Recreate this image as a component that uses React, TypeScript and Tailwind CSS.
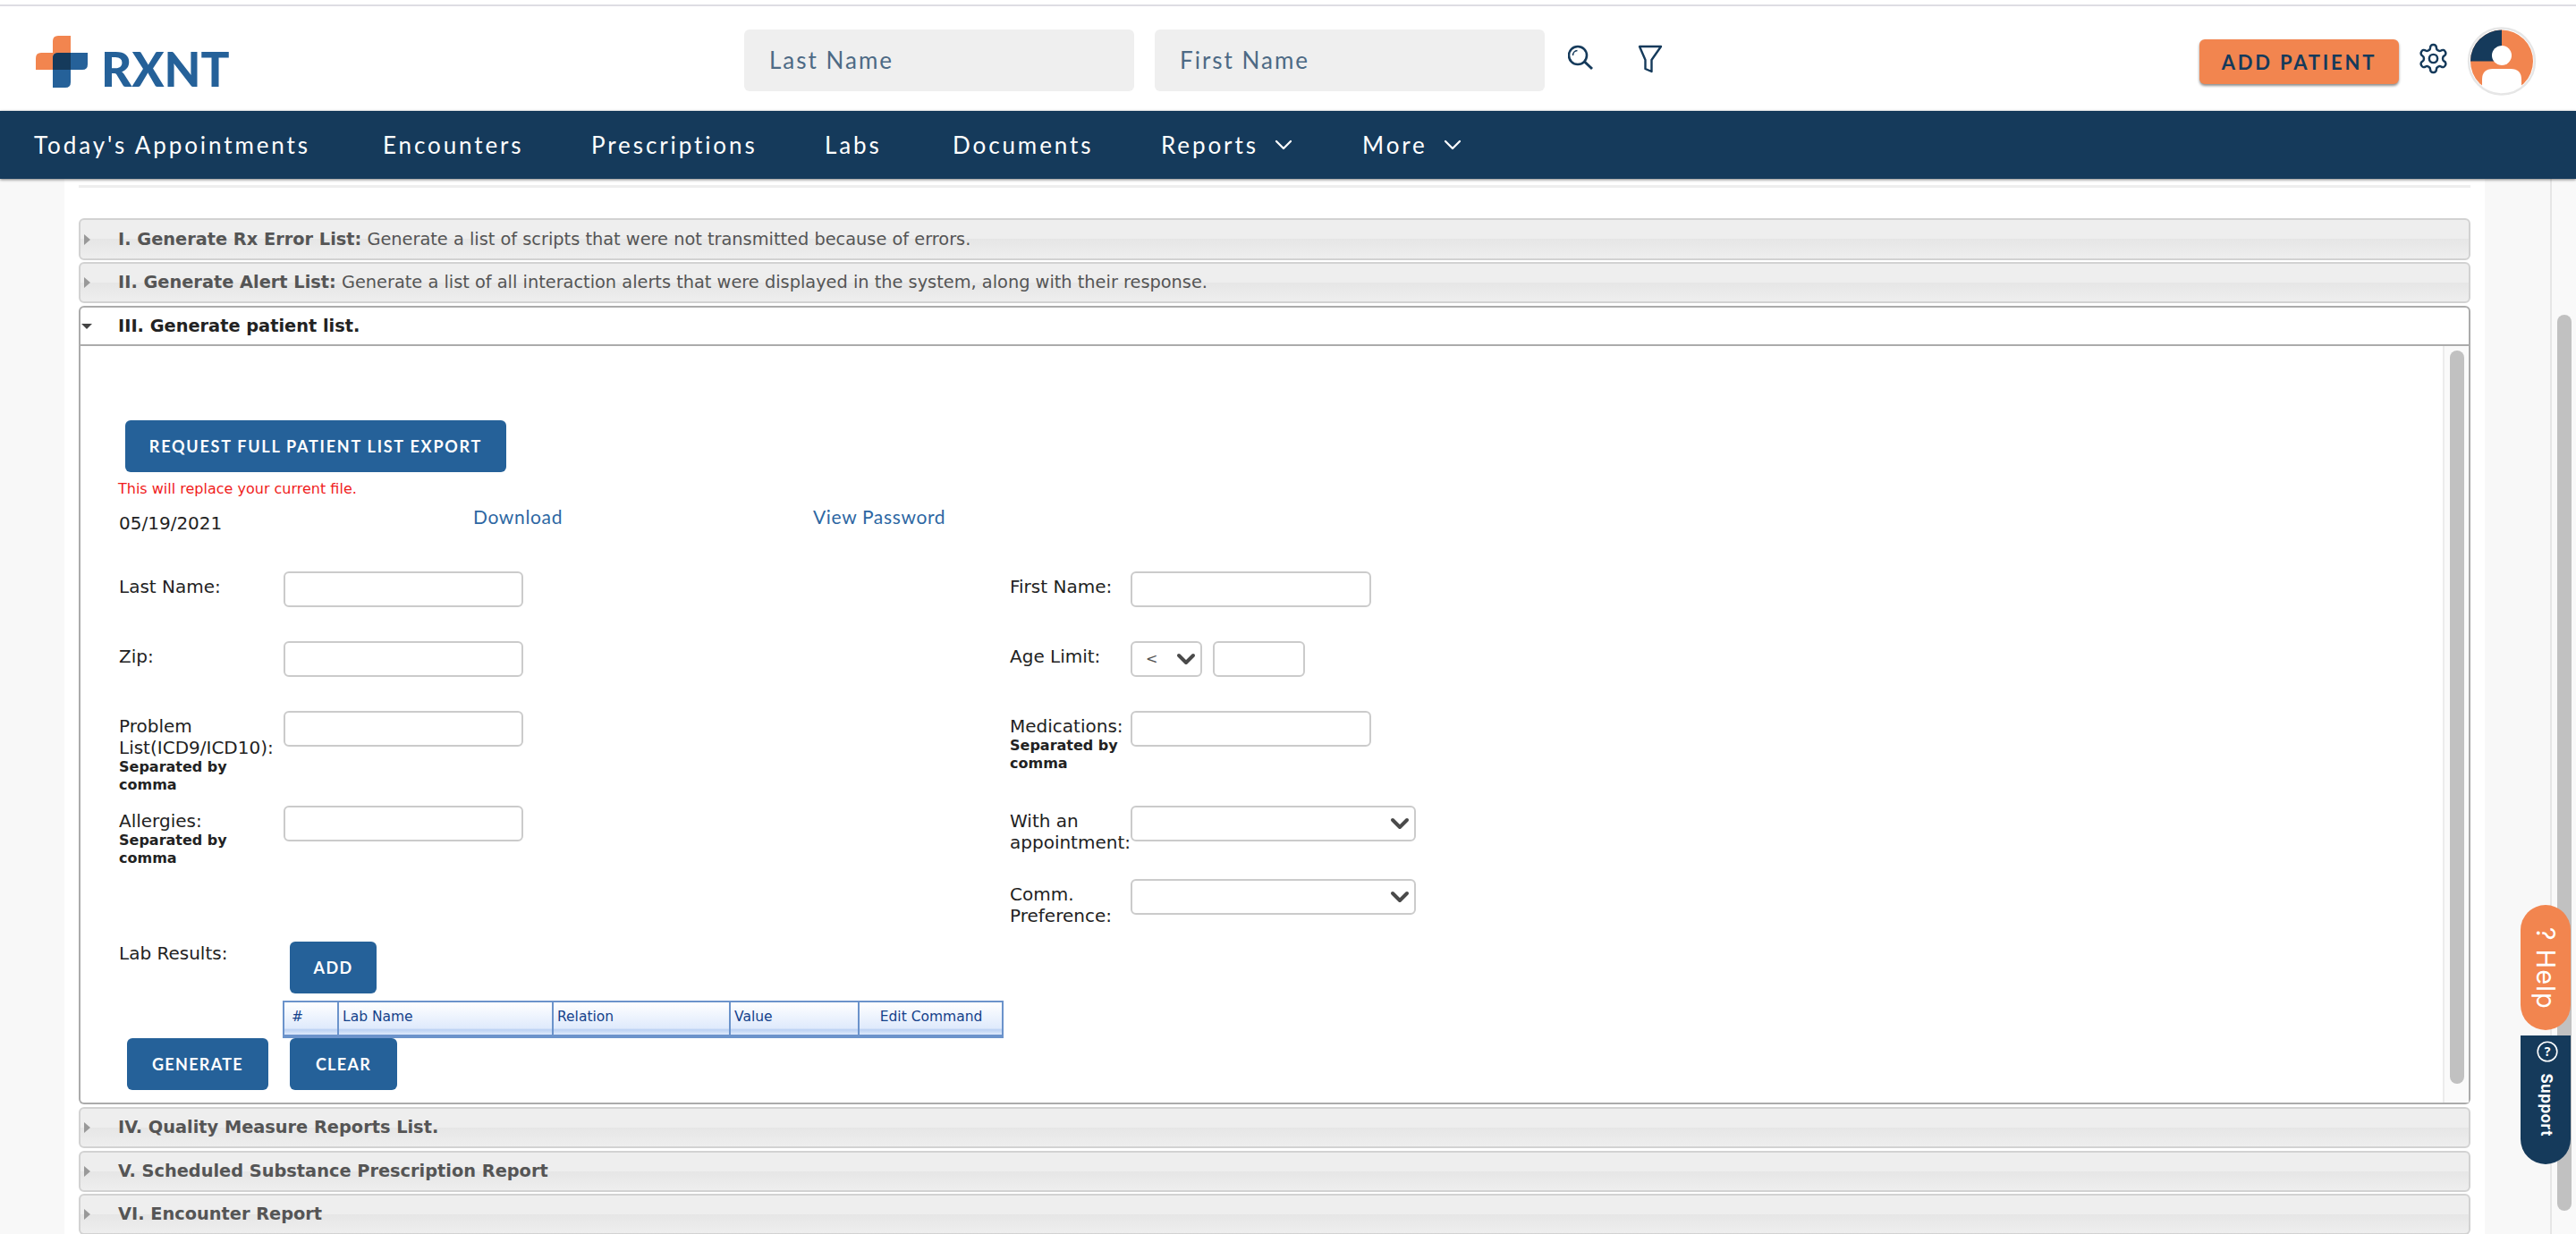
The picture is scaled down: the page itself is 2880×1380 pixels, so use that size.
import { ChevronDown } from 'lucide-react';
import type { ReactNode } from 'react';

const UI_FONT = "font-['Lato','Liberation_Sans',sans-serif]";
const FORM_FONT = "font-['DejaVu_Sans','Liberation_Sans',sans-serif]";
const TAB_FONT = "font-['Inter','Liberation_Sans',sans-serif]";

const NAV_ITEMS = [
  { label: "Today's Appointments", width: 'w-[390px]' },
  { label: 'Encounters', width: 'w-[233px]' },
  { label: 'Prescriptions', width: 'w-[261px]' },
  { label: 'Labs', width: 'w-[143px]' },
  { label: 'Documents', width: 'w-[233px]' },
];

const TABLE_COLUMNS = [
  { label: '#', width: 'w-[61px]', align: 'pl-[8px] text-left' },
  { label: 'Lab Name', width: 'w-[240px]', align: 'pl-[4px] text-left' },
  { label: 'Relation', width: 'w-[198px]', align: 'pl-[4px] text-left' },
  { label: 'Value', width: 'w-[144px]', align: 'pl-[4px] text-left' },
  { label: 'Edit Command', width: 'flex-1', align: 'pl-[7px] text-center' },
];

function Logo() {
  return (
    <div className="flex items-end">
      <svg width="58" height="58" viewBox="0 0 58 58">
        <path d="M25 0h14v38H0V25q0-6 6-6h13v-13q0-6 6-6z" fill="#f2854f" />
        <path d="M19 25q0-6 6-6h33v13q0 6-6 6H39v14q0 6-6 6H19z" fill="#256199" />
        <path d="M19 25q0-6 6-6h14v19H19z" fill="#153a5b" />
      </svg>
      <span className="mb-[2px] ml-[15px] text-[53px] leading-[38px] font-black text-[#256199] font-['Lato',sans-serif]">
        RXNT
      </span>
    </div>
  );
}

function SearchInput({ placeholder }: { placeholder: string }) {
  return (
    <div
      className={`flex h-[69px] w-[436px] items-center rounded-md bg-[#efefef] pl-[28px] text-[26px] tracking-[2px] text-[#4d6a85] ${UI_FONT}`}
    >
      {placeholder}
    </div>
  );
}

function Avatar() {
  return (
    <svg width="78" height="77" viewBox="0 0 78 77">
      <circle cx="39" cy="38.5" r="35" fill="#f2854f" />
      <path d="M39 38.5V3.5A35 35 0 0 0 4 38.5z" fill="#153a5b" />
      <circle cx="39" cy="32" r="11" fill="#fff" />
      <path d="M17 77V59q0-12 12-12h20q12 0 12 12v18z" fill="#fff" />
      <circle cx="39" cy="38.5" r="37" fill="none" stroke="#e6e6e6" strokeWidth="2.4" />
    </svg>
  );
}

function Header() {
  return (
    <header className="flex h-[117px] items-start bg-white pl-[40px]">
      <div className="mt-[33px] w-[792px]">
        <Logo />
      </div>
      <div className="mt-[26px] flex gap-[23px]">
        <SearchInput placeholder="Last Name" />
        <SearchInput placeholder="First Name" />
      </div>
      <svg className="mt-[43px] ml-[26px]" width="30" height="30" viewBox="0 0 30 30" fill="none" stroke="#153a5b" strokeWidth="2.6">
        <circle cx="11" cy="12" r="10" />
        <path d="M18.5 19l8.5 8" strokeWidth="3" />
        <path d="M5.5 12a5.5 5.5 0 0 1 5-5.5" strokeWidth="1.6" />
      </svg>
      <svg className="mt-[43px] ml-[48px]" width="28" height="32" viewBox="0 0 28 32" fill="none" stroke="#153a5b" strokeWidth="2.4" strokeLinejoin="round">
        <path d="M2 2h24L15.5 17v13L8.5 27V17z" />
      </svg>
      <div className="mt-[37px] ml-[600px] flex h-[50px] w-[223px] items-center justify-center rounded-md bg-[#f2854f] shadow-[0_2px_3px_rgba(0,0,0,0.45)]">
        <span className={`text-[22px] font-bold tracking-[2.8px] text-[#153a5b] ${UI_FONT}`}>ADD PATIENT</span>
      </div>
      <svg className="mt-[40px] ml-[20px]" width="37" height="37" viewBox="0 0 24 24" fill="none" stroke="#153a5b" strokeWidth="1.6" strokeLinecap="round" strokeLinejoin="round">
        <path d="M12.22 2h-.44a2 2 0 0 0-2 2v.18a2 2 0 0 1-1 1.73l-.43.25a2 2 0 0 1-2 0l-.15-.08a2 2 0 0 0-2.73.73l-.22.38a2 2 0 0 0 .73 2.73l.15.1a2 2 0 0 1 1 1.72v.51a2 2 0 0 1-1 1.74l-.15.09a2 2 0 0 0-.73 2.73l.22.38a2 2 0 0 0 2.73.73l.15-.08a2 2 0 0 1 2 0l.43.25a2 2 0 0 1 1 1.73V20a2 2 0 0 0 2 2h.44a2 2 0 0 0 2-2v-.18a2 2 0 0 1 1-1.73l.43-.25a2 2 0 0 1 2 0l.15.08a2 2 0 0 0 2.73-.73l.22-.39a2 2 0 0 0-.73-2.73l-.15-.08a2 2 0 0 1-1-1.74v-.5a2 2 0 0 1 1-1.74l.15-.09a2 2 0 0 0 .73-2.73l-.22-.38a2 2 0 0 0-2.73-.73l-.15.08a2 2 0 0 1-2 0l-.43-.25a2 2 0 0 1-1-1.73V4a2 2 0 0 0-2-2z" />
        <circle cx="12" cy="12" r="3" />
      </svg>
      <div className="mt-[23px] ml-[19px]">
        <Avatar />
      </div>
    </header>
  );
}

function NavBar() {
  return (
    <nav className={`relative z-10 flex h-[76px] items-center bg-[#153a5b] pl-[38px] text-[26px] tracking-[2.9px] text-white shadow-[0_1px_3px_rgba(0,0,0,0.5)] ${UI_FONT}`}>
      {NAV_ITEMS.map((item) => (
        <span key={item.label} className={item.width}>
          {item.label}
        </span>
      ))}
      <span className="flex w-[225px] items-center gap-[12px]">
        Reports <ChevronDown className="h-[32px] w-[32px]" strokeWidth={1.7} />
      </span>
      <span className="flex items-center gap-[12px]">
        More <ChevronDown className="h-[32px] w-[32px]" strokeWidth={1.7} />
      </span>
    </nav>
  );
}

function AccordionRow({ title, text, spacing, height = 'h-[46px]' }: { title: string; text?: string; spacing: string; height?: string }) {
  return (
    <div className={`flex items-center rounded-md border-2 border-[#d2d2d2] bg-[linear-gradient(#eeeeee_50%,#e6e6e6_50%,#eeeeee_100%)] text-[19.35px] text-[#555] ${height} ${spacing} ${FORM_FONT}`}>
      <span className="ml-[4px] h-0 w-0 border-y-[6px] border-l-[7px] border-y-transparent border-l-[#999]" />
      <span className="ml-[31px]">
        <b>{title}</b>
        {text ? ` ${text}` : ''}
      </span>
    </div>
  );
}

function Label({ children, width = 'w-[184px]' }: { children: ReactNode; width?: string }) {
  return <div className={`shrink-0 pt-[5px] text-[20px] leading-[24px] text-[#222] ${width}`}>{children}</div>;
}

function Note() {
  return <div className="text-[16px] leading-[20px] font-bold text-[#222]">Separated by comma</div>;
}

function TextBox({ width = 'w-[268px]' }: { width?: string }) {
  return <div className={`h-[40px] shrink-0 rounded-md border-2 border-[#cbcbcb] bg-white ${width}`} />;
}

function SelectBox({ width, value }: { width: string; value?: string }) {
  return (
    <div className={`flex h-[40px] shrink-0 items-center justify-between rounded-md border-2 border-[#cbcbcb] bg-white pl-[15px] text-[16px] text-[#555] ${width}`}>
      <span>{value}</span>
      <ChevronDown className="h-[32px] w-[32px] text-[#4a4a4a]" strokeWidth={3} />
    </div>
  );
}

function FieldRow({ height, left, right }: { height: string; left?: ReactNode; right?: ReactNode }) {
  return (
    <div className={`flex ${height}`}>
      <div className="flex w-[996px] shrink-0">{left}</div>
      <div className="flex">{right}</div>
    </div>
  );
}

function BlueButton({ children, width, spacing = 'tracking-[1.3px]' }: { children: ReactNode; width: string; spacing?: string }) {
  return (
    <div className={`flex h-[58px] items-center justify-center rounded-md bg-[#256199] text-[18px] font-bold text-white ${spacing} ${width} ${UI_FONT}`}>
      {children}
    </div>
  );
}

function PatientListForm() {
  return (
    <div className={`flex h-[848px] rounded-b-md border-x-2 border-b-2 border-[#ababab] ${FORM_FONT}`}>
      <div className="min-w-0 flex-1 pl-[43px]">
        <div className="ml-[7px] pt-[83px]">
          <BlueButton width="w-[426px]" spacing="tracking-[1.75px]">REQUEST FULL PATIENT LIST EXPORT</BlueButton>
        </div>
        <div className="mt-[9px] -ml-[1px] text-[16px] leading-[20px] text-[#f01c1c]">This will replace your current file.</div>
        <div className="mt-[9px] flex">
          <span className="mt-[7px] w-[396px] text-[20px] leading-[24px] text-[#222]">05/19/2021</span>
          <span className={`w-[380px] text-[21px] leading-[24px] tracking-[0.65px] text-[#2d67a3] ${UI_FONT}`}>Download</span>
          <span className={`text-[21px] leading-[24px] tracking-[0.65px] text-[#2d67a3] ${UI_FONT}`}>View Password</span>
        </div>
        <div className="pt-[42px]">
          <FieldRow
            height="h-[78px]"
            left={<><Label>Last Name:</Label><TextBox /></>}
            right={<><Label width="w-[135px]">First Name:</Label><TextBox width="w-[269px]" /></>}
          />
          <FieldRow
            height="h-[78px]"
            left={<><Label>Zip:</Label><TextBox /></>}
            right={
              <>
                <Label width="w-[135px]">Age Limit:</Label>
                <SelectBox width="w-[80px]" value="<" />
                <div className="ml-[12px]"><TextBox width="w-[103px]" /></div>
              </>
            }
          />
          <FieldRow
            height="h-[106px]"
            left={<><Label><div>Problem List(ICD9/ICD10):</div><Note /></Label><TextBox /></>}
            right={<><Label width="w-[135px]"><div>Medications:</div><Note /></Label><TextBox width="w-[269px]" /></>}
          />
          <FieldRow
            height="h-[82px]"
            left={<><Label><div>Allergies:</div><Note /></Label><TextBox /></>}
            right={<><Label width="w-[135px]">With an appointment:</Label><SelectBox width="w-[319px]" /></>}
          />
          <FieldRow
            height="h-[70px]"
            right={<><Label width="w-[135px]">Comm. Preference:</Label><SelectBox width="w-[319px]" /></>}
          />
        </div>
        <div className="flex">
          <div className="w-[191px] pt-[1px] text-[20px] leading-[24px] text-[#222]">Lab Results:</div>
          <BlueButton width="w-[97px]">ADD</BlueButton>
        </div>
        <div className="mt-[8px] ml-[183px] flex h-[42px] w-[806px] border-2 border-b-[4px] border-[#6b93cb] bg-[linear-gradient(#ffffff,#dfeafc_80%,#bcd2f3_85%,#dfeafc)] text-[15.5px] text-[#15428b]">
          {TABLE_COLUMNS.map((col) => (
            <div key={col.label} className={`${col.width} ${col.align} border-r-2 border-[#6b93cb] pr-[6px] leading-[32px] last:border-r-0`}>
              {col.label}
            </div>
          ))}
        </div>
        <div className="ml-[9px] flex gap-[24px]">
          <BlueButton width="w-[158px]">GENERATE</BlueButton>
          <BlueButton width="w-[120px]">CLEAR</BlueButton>
        </div>
      </div>
      <div className="flex w-[29px] shrink-0 justify-center border-l-2 border-[#ececec] bg-[#fafafa] pt-[5px]">
        <div className="h-[820px] w-[16px] rounded-full bg-[#c1c1c1]" />
      </div>
    </div>
  );
}

export default function App() {
  return (
    <div className="relative h-[1380px] w-[2880px] overflow-hidden bg-white">
      <div className="h-[7px] border-b-[2px] border-[#dedde3]" />
      <Header />
      <NavBar />
      <div className="flex h-[1180px] overflow-hidden">
        <div className="w-[72px] shrink-0 bg-[#f8f8f8]" />
        <main className="w-[2706px] shrink-0 bg-white px-[16px]">
          <div className="mt-[7px] h-[3px] bg-[#eeeeee]" />
          <AccordionRow spacing="mt-[34px]" height="h-[47px]" title="I. Generate Rx Error List:" text="Generate a list of scripts that were not transmitted because of errors." />
          <AccordionRow spacing="mt-[2px]" title="II. Generate Alert List:" text="Generate a list of all interaction alerts that were displayed in the system, along with their response." />
          <div className={`mt-[3px] flex h-[45px] items-center rounded-t-md border-2 border-[#ababab] bg-white pt-[1px] text-[19.35px] text-[#222] ${FORM_FONT}`}>
            <span className="ml-[1px] h-0 w-0 border-x-[6px] border-t-[6px] border-x-transparent border-t-[#444]" />
            <b className="ml-[29px]">III. Generate patient list.</b>
          </div>
          <PatientListForm />
          <AccordionRow spacing="mt-[3px]" title="IV. Quality Measure Reports List." />
          <AccordionRow spacing="mt-[3px]" title="V. Scheduled Substance Prescription Report" />
          <AccordionRow spacing="mt-[2px]" title="VI. Encounter Report" />
        </main>
        <div className="flex-1 bg-[#f8f8f8]" />
        <div className="flex w-[29px] shrink-0 justify-center border-l-2 border-[#e6e6e6] bg-[#f9f9f9] pt-[152px]">
          <div className="h-[1002px] w-[16px] rounded-full bg-[#c1c1c1]" />
        </div>
      </div>

      {/* floating help tabs */}
      <div className="absolute top-[1012px] left-[2818px] flex h-[140px] w-[56px] items-center justify-center rounded-[28px] bg-[#f2854f] pt-[2px]">
        <span className={`rotate-90 text-[29px] whitespace-nowrap tracking-[1px] text-white ${TAB_FONT}`}>? Help</span>
      </div>
      <div className="absolute top-[1158px] left-[2818px] flex h-[144px] w-[56px] flex-col items-center rounded-b-[28px] bg-[#153a5b] pt-[6px]">
        <svg width="24" height="24" viewBox="0 0 24 24" fill="none" stroke="#fff" strokeWidth="1.6" className="ml-[3px]">
          <circle cx="12" cy="12" r="10.8" />
          <text x="12" y="17" textAnchor="middle" fontSize="14" fontWeight="700" fill="#fff" stroke="none">?</text>
        </svg>
        <div className="mt-[40px] flex h-[16px] items-center">
          <span className={`rotate-90 text-[17px] font-bold tracking-[0.5px] text-white ${TAB_FONT}`}>Support</span>
        </div>
      </div>
    </div>
  );
}
